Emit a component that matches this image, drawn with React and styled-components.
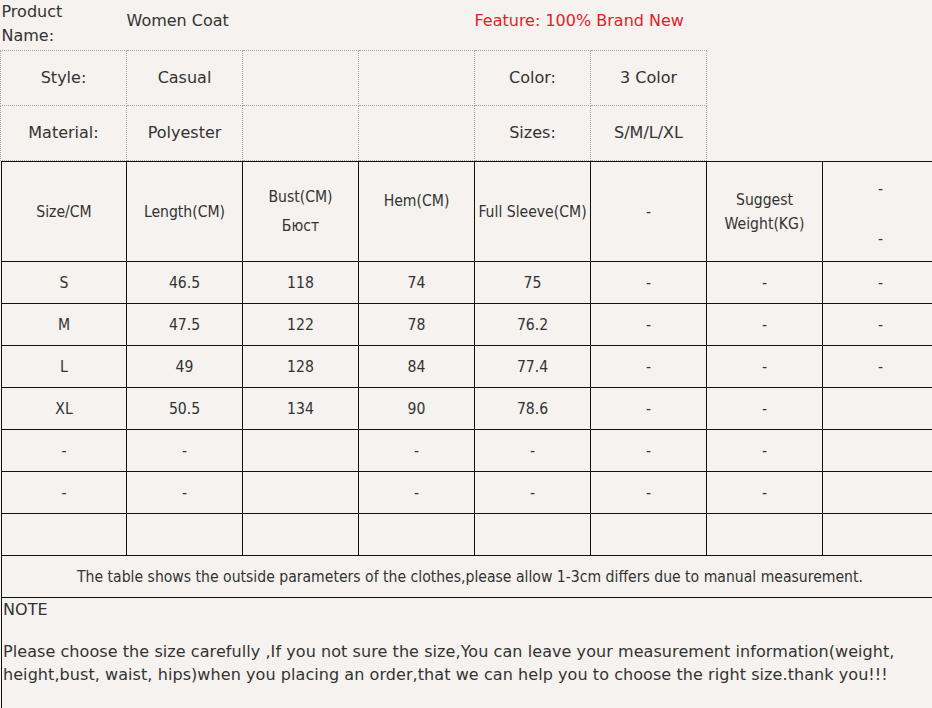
import React from "react";
import styled, { createGlobalStyle } from "styled-components";

const GlobalStyle = createGlobalStyle`
  html, body {
    margin: 0;
    padding: 0;
    background: #f5f2ef;
    overflow: hidden;
  }
  body {
    font-family: "DejaVu Sans", Verdana, sans-serif;
    color: #333;
  }
`;

const Page = styled.div`
  width: 940px;
  background: #f5f2ef;
`;

const InfoTable = styled.table`
  border-collapse: collapse;
  table-layout: fixed;
  width: 706px;
  font-size: 16px;
  line-height: 24px;
`;

const InfoCell = styled.td`
  border: ${(props) => (props.plain ? "none" : "1px dotted #a8a8a8")};
  text-align: ${(props) => (props.plain ? "left" : "center")};
  color: ${(props) => (props.red ? "#e3202a" : "#333")};
  height: ${(props) => (props.plain ? "50px" : "54px")};
  padding: 0;
  vertical-align: ${(props) => (props.plain ? "top" : "middle")};
`;

const PlainText = styled.div`
  padding-top: ${(props) => props.top || "0"};
  padding-left: ${(props) => props.left || "0"};
  width: ${(props) => props.width || "auto"};
`;

const SizeTable = styled.table`
  border-collapse: collapse;
  table-layout: fixed;
  width: 938px;
  margin-left: 1px;
  font-family: Tahoma, "DejaVu Sans Condensed", "DejaVu Sans", sans-serif;
  font-size: 15.6px;
  line-height: 24px;
  color: #333;
`;

const Cell = styled.td`
  border: 1px solid #111;
  text-align: center;
  vertical-align: middle;
  height: ${(props) => (props.head ? "99px" : "41px")};
  padding: 0;
`;

const HeadLines = styled.div`
  display: flex;
  flex-direction: column;
  align-items: center;
  gap: ${(props) => props.gap || "0"};
  padding-top: ${(props) => props.top || "0"};
`;

const Caption = styled.td`
  border: 1px solid #111;
  text-align: center;
  height: 41px;
  padding: 0;
`;

const NoteCell = styled.td`
  border-left: 1px solid #111;
  border-top: 1px solid #111;
  padding: 0 0 0 1px;
  vertical-align: top;
  font-family: "DejaVu Sans", Verdana, sans-serif;
  font-size: 16px;
  line-height: 23px;
  letter-spacing: 0.07px;
  height: 120px;
`;

const NoteTitle = styled.div`
  padding-top: 0;
`;

const NoteText = styled.p`
  margin: 19px 0 0;
  width: 905px;
`;

const rows = [
  ["S", "46.5", "118", "74", "75", "-", "-", "-"],
  ["M", "47.5", "122", "78", "76.2", "-", "-", "-"],
  ["L", "49", "128", "84", "77.4", "-", "-", "-"],
  ["XL", "50.5", "134", "90", "78.6", "-", "-", ""],
  ["-", "-", "", "-", "-", "-", "-", ""],
  ["-", "-", "", "-", "-", "-", "-", ""],
  ["", "", "", "", "", "", "", ""],
];

const widths = [125, 116, 116, 116, 116, 116, 116, 116];

const App = () => {
  return (
    <Page>
      <GlobalStyle />
      <InfoTable>
        <colgroup>
          {widths.slice(0, 6).map((w, i) => (
            <col key={i} style={{ width: w + (i === 0 ? 1 : 0) }} />
          ))}
        </colgroup>
        <tbody>
          <tr>
            <InfoCell plain>
              <PlainText left="1px" width="100px">Product Name:</PlainText>
            </InfoCell>
            <InfoCell plain>
              <PlainText top="9px">Women Coat</PlainText>
            </InfoCell>
            <InfoCell plain />
            <InfoCell plain />
            <InfoCell plain red colSpan={2}>
              <PlainText top="9px">Feature: 100% Brand New</PlainText>
            </InfoCell>
          </tr>
          <tr>
            <InfoCell>Style:</InfoCell>
            <InfoCell>Casual</InfoCell>
            <InfoCell />
            <InfoCell />
            <InfoCell>Color:</InfoCell>
            <InfoCell>3 Color</InfoCell>
          </tr>
          <tr>
            <InfoCell>Material:</InfoCell>
            <InfoCell>Polyester</InfoCell>
            <InfoCell />
            <InfoCell />
            <InfoCell>Sizes:</InfoCell>
            <InfoCell>S/M/L/XL</InfoCell>
          </tr>
        </tbody>
      </InfoTable>
      <SizeTable>
        <colgroup>
          {widths.map((w, i) => (
            <col key={i} style={{ width: w }} />
          ))}
        </colgroup>
        <tbody>
          <tr>
            <Cell head>Size/CM</Cell>
            <Cell head>Length(CM)</Cell>
            <Cell head>
              <HeadLines gap="5px">
                <span>Bust(CM)</span>
                <span>Бюст</span>
              </HeadLines>
            </Cell>
            <Cell head>
              <HeadLines top="3px">
                <span>Hem(CM)</span>
                <span>&nbsp;</span>
              </HeadLines>
            </Cell>
            <Cell head>Full Sleeve(CM)</Cell>
            <Cell head>-</Cell>
            <Cell head>
              <HeadLines>
                <span>Suggest</span>
                <span>Weight(KG)</span>
              </HeadLines>
            </Cell>
            <Cell head>
              <HeadLines gap="26px" top="4px">
                <span>-</span>
                <span>-</span>
              </HeadLines>
            </Cell>
          </tr>
          {rows.map((r, i) => (
            <tr key={i}>
              {r.map((v, j) => (
                <Cell key={j}>{v}</Cell>
              ))}
            </tr>
          ))}
          <tr>
            <Caption colSpan={8}>
              The table shows the outside parameters of the clothes,please allow 1-3cm differs due to manual measurement.
            </Caption>
          </tr>
          <tr>
            <NoteCell colSpan={8}>
              <NoteTitle>NOTE</NoteTitle>
              <NoteText>
                Please choose the size carefully ,If you not sure the size,You can leave your measurement
                information(weight, height,bust, waist, hips)when you placing an order,that we can help you to
                choose the right size.thank you!!!
              </NoteText>
            </NoteCell>
          </tr>
        </tbody>
      </SizeTable>
    </Page>
  );
};

export default App;
